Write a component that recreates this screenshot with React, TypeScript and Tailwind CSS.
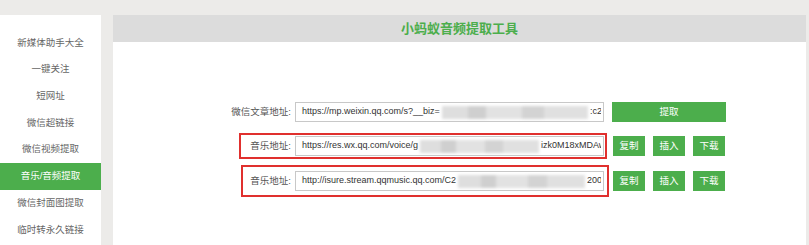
import React from 'react';

const menu = ['新媒体助手大全', '一键关注', '短网址', '微信超链接', '微信视频提取', '音乐/音频提取', '微信封面图提取', '临时转永久链接'];

const cjk = "font-['Liberation_Sans','Noto_Sans_CJK_SC',sans-serif]";

// blurred-out part of a url (the screenshot has it smudged)
const Smudge: React.FC = () => (
    <span className="flex-1 min-w-0 h-[13px] mx-[2px] flex items-center blur-[1.5px]">
        <span className="h-full w-[18%] bg-[#dedede]" />
        <span className="h-full w-[12%] bg-[#cfcfcf]" />
        <span className="h-full w-[25%] bg-[#e2e2e2]" />
        <span className="h-full w-[15%] bg-[#d3d3d3]" />
        <span className="h-full w-[30%] bg-[#e0e0e0]" />
    </span>
);

const UrlBox: React.FC<{ head: string; tail: string; tailW: string }> = ({ head, tail, tailW }) => (
    <div className="ml-[4px] w-[309px] h-[20px] border border-[#c8c8c8] bg-white pl-[6px] pr-[2px] flex items-center overflow-hidden whitespace-nowrap text-[9px] text-[#333] font-['Liberation_Sans',sans-serif]">
        <span className="shrink-0">{head}</span>
        <Smudge />
        <span className={`shrink-0 overflow-hidden ${tailW}`}>{tail}</span>
    </div>
);

const SmallButtons: React.FC = () => (
    <div className="flex gap-[8px]">
        {['复制', '插入', '下载'].map((t) => (
            <button key={t} className="w-[32px] h-[20px] bg-[#4cae4c] text-white text-[9.5px] flex items-center justify-center">
                {t}
            </button>
        ))}
    </div>
);

export default function App() {
    return (
        <div className={`w-[809px] h-[245px] bg-[#ecebe9] pt-[15px] flex overflow-hidden ${cjk}`}>

            {/* Sidebar */}
            <div className="w-[101px] bg-white pt-[14.5px] flex flex-col">
                {menu.map((m) => (
                    <div
                        key={m}
                        className={
                            m === '音乐/音频提取'
                                ? 'h-[26.7px] flex items-center justify-center text-[9.5px] bg-[#4cae4c] text-white'
                                : 'h-[26.7px] flex items-center justify-center text-[9.5px] text-[#666]'
                        }
                    >
                        {m}
                    </div>
                ))}
            </div>

            {/* Main panel */}
            <div className="ml-[12px] w-[693px] bg-white flex flex-col">
                <div className="h-[27px] bg-[#dcdcdc] flex items-center justify-center text-[13px] font-bold text-[#4cae4c]">
                    小蚂蚁音频提取工具
                </div>

                <div className="pt-[60px] pl-[112px] flex flex-col">
                    {/* Article url */}
                    <div className="flex items-center">
                        <span className="w-[66px] text-right text-[9.5px] text-[#555] whitespace-nowrap">微信文章地址:</span>
                        <UrlBox head="https://mp.weixin.qq.com/s?__biz=" tail=":c2" tailW="w-[11px]" />
                        <button className="ml-[8px] w-[114px] h-[20px] bg-[#4cae4c] text-white text-[9.5px]">提取</button>
                    </div>

                    {/* Music url 1 */}
                    <div className="mt-[11px] flex items-center">
                        <div className="ml-[14px] w-[368px] border-2 border-[#e0302e] py-px flex items-center">
                            <span className="w-[50px] text-right text-[9.5px] text-[#555] whitespace-nowrap">音乐地址:</span>
                            <UrlBox head="https://res.wx.qq.com/voice/g" tail="izk0M18xMDAw" tailW="w-[60px]" />
                        </div>
                        <div className="ml-[6px]">
                            <SmallButtons />
                        </div>
                    </div>

                    {/* Music url 2 */}
                    <div className="mt-[6px] flex items-center">
                        <div className="ml-[16px] w-[368px] border-2 border-[#e0302e] py-[4px] flex items-center">
                            <span className="w-[48px] text-right text-[9.5px] text-[#555] whitespace-nowrap">音乐地址:</span>
                            <UrlBox head="http://isure.stream.qqmusic.qq.com/C2" tail="2000" tailW="w-[14px]" />
                        </div>
                        <div className="ml-[4px]">
                            <SmallButtons />
                        </div>
                    </div>
                </div>
            </div>
        </div>
    );
}
